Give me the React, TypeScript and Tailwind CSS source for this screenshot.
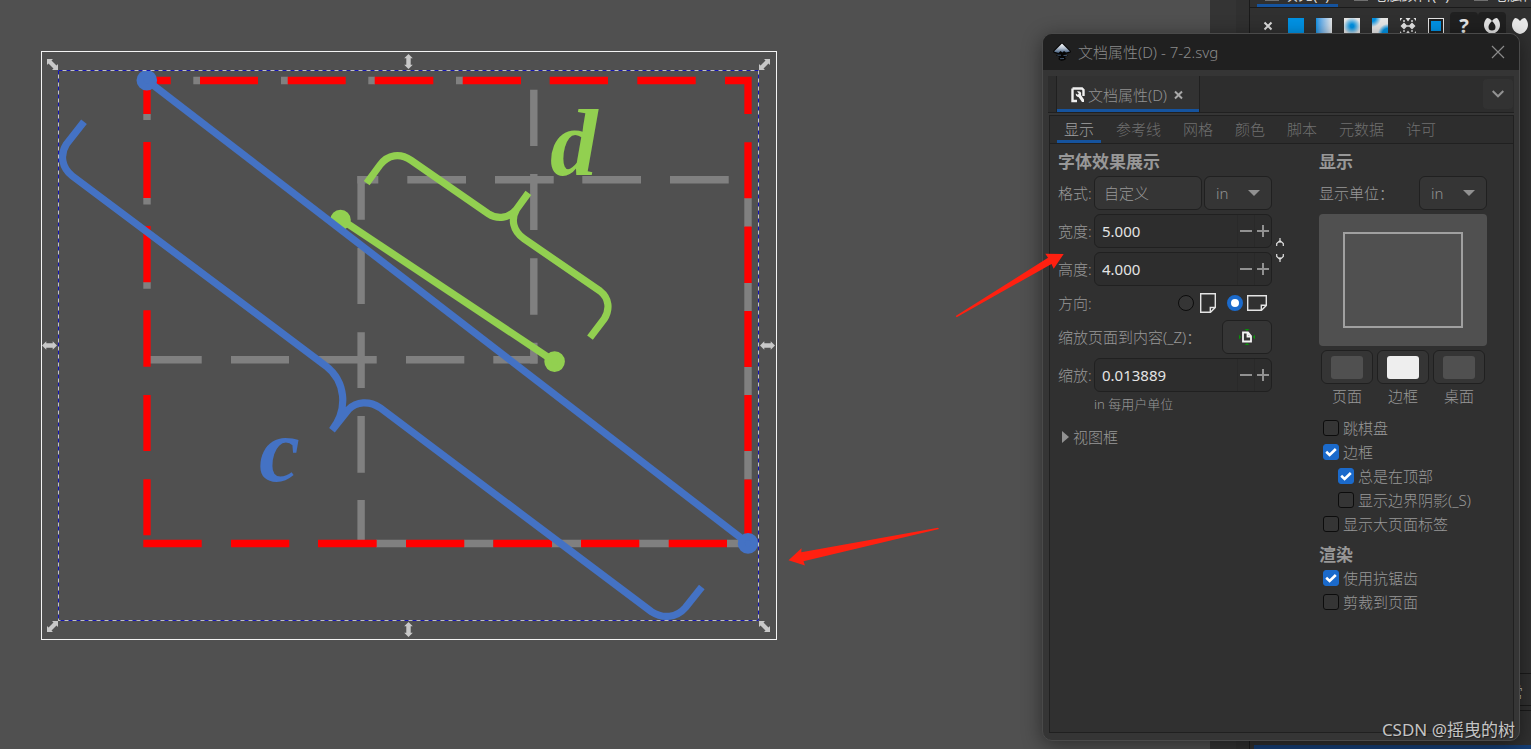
import React, { useState } from 'react';
import { clsx } from 'clsx';

const BLUE = '#4472c4';
const GREEN = '#92d050';
const GREY = '#808080';

const HANDLE_DIAGONAL = 'M-5.5-5.5H.5L-1-4 4 1 5.5-.5V5.5H-.5L1 4-4-1-5.5.5Z';
const HANDLE_STRAIGHT = 'M0-7.5 4.3-3.2H2.2V3.2H4.3L0 7.5-4.3 3.2H-2.2V-3.2H-4.3Z';

const HANDLES = [
  { x: 52.5, y: 64.5, d: HANDLE_DIAGONAL, turn: 0 },
  { x: 408.5, y: 61.5, d: HANDLE_STRAIGHT, turn: 0 },
  { x: 764.5, y: 64.5, d: HANDLE_DIAGONAL, turn: 90 },
  { x: 767.5, y: 345.5, d: HANDLE_STRAIGHT, turn: 90 },
  { x: 764.5, y: 626.5, d: HANDLE_DIAGONAL, turn: 0 },
  { x: 408.5, y: 629.5, d: HANDLE_STRAIGHT, turn: 0 },
  { x: 52.5, y: 626.5, d: HANDLE_DIAGONAL, turn: 90 },
  { x: 49.5, y: 345.5, d: HANDLE_STRAIGHT, turn: 90 },
];

const Drawing: React.FC = () => (
  <svg viewBox="0 0 1210 749" preserveAspectRatio="xMinYMin meet" className="block h-full w-full" aria-label="drawing">
    <rect x="41.5" y="51.5" width="735" height="588" fill="none" stroke="#f4f4f4" />

    {/* grey dashes */}
    <g stroke={GREY} strokeWidth="7.4" fill="none">
      <path d="M147 114V120M147 198V204.5M147 282V288.7" />
      <path d="M193.3 80.5H200M281 80.5H288M368.3 80.5H375M456 80.5H463" />
      <path d="M748 198V227M748 283V311M748 367V395.3M748 451V479.5" />
      <path d="M376 543.5H406.5M464 543.5H493.5M551 543.5H581.3M639 543.5H669M727 543.5H742" />
      <path d="M361.1 176V219.7M361.1 247.7V304M361.1 332.3V388M361.1 416V472.7M361.1 500V540" />
      <path d="M533.8 89.7V146M533.8 174V230M533.8 258.3V314.7M533.8 342.7V363.4" />
      <path d="M357.4 179.8H378.3M407.3 179.8H466M495 179.8H553.7M582.3 179.8H641M670 179.8H728.7" />
      <path d="M150 359.7H201.7M231 359.7H289M318.3 359.7H376.7M406 359.7H464.3M493.3 359.7H537.5" />
    </g>

    {/* red outer frame */}
    <g stroke="#ff0000" strokeWidth="7.3" fill="none">
      <path d="M147 80V114M147 142V198M147 226V282.3M147 310.3V366.7M147 395V451M147 479.3V535.3" />
      <path d="M147 80.5H170.7M200 80.5H258M287.7 80.5H345.7M374.7 80.5H433.3M462.7 80.5H521M549.7 80.5H608M637.3 80.5H695.7" />
      <path d="M725 80.5H748V114M748 142.3V198.3M748 226.6V283M748 311V367M748 395V451M748 479.5V540" />
      <path d="M143.3 543.5H201.7M231 543.5H289.3M318 543.5H376.7M406 543.5H464.3M493.3 543.5H552M581 543.5H639.3M668.7 543.5H727" />
    </g>

    {/* line d with its brace */}
    <g stroke={GREEN} strokeWidth="7.2" fill="none">
      <path d="M340.5 219 554.5 361.5" />
      <circle cx="340.5" cy="220" r="6.7" fill={GREEN} />
      <circle cx="554.6" cy="361.6" r="6.7" fill={GREEN} />
      <path d="M366.7 183.2 380 165C388 154.5 400 152.8 411 160.3L488.3 213.7C498 220 509 218 516.3 209.5L528.4 192.8" />
      <path d="M516.3 209.8C511 219 512.5 231 524 238.8L600 291C609 298 610.5 309 604 319.3L590 337.6" />
    </g>
    <text x="550" y="174.5" fontSize="95" fill={GREEN} className="font-['Liberation_Serif',serif] font-bold italic">d</text>

    {/* line c with its brace */}
    <g stroke={BLUE} strokeWidth="7.2" fill="none">
      <path d="M147 80.3 748 543.4" />
      <circle cx="146.8" cy="80.3" r="6.7" fill={BLUE} />
      <circle cx="748" cy="543.4" r="6.7" fill={BLUE} />
      <path d="M84 121.7 66.5 144C59.5 155 62 168 72.3 176L326 366C345 381 349 408 332 430.2L348.5 409.5C356.5 401.5 369 400.5 380 407.7L651.5 611.7C663 619 676.5 618 685.5 607.5L701.8 587" />
    </g>
    <text x="259" y="480.5" fontSize="92" fill={BLUE} className="font-['Liberation_Serif',serif] font-bold italic">c</text>

    {/* selection box */}
    <rect x="58.5" y="70.5" width="700" height="550" fill="none" stroke="#c4c4c4" />
    <rect x="58.5" y="70.5" width="700" height="550" fill="none" stroke="#1414b4" strokeDasharray="4 4" />
    {HANDLES.map((h) => (
      <path key={`${h.x}-${h.y}`} d={h.d} fill="#c8c8c8" transform={`translate(${h.x} ${h.y}) rotate(${h.turn})`} />
    ))}
  </svg>
);

const PAINT_BUTTON = 'grid size-7 shrink-0 place-items-center rounded';

const PaintIcons: React.FC = () => (
  <div className="flex h-7 shrink-0 items-center pl-1">
    <button type="button" aria-label="none" className={PAINT_BUTTON}>
      <svg width="16" height="16" viewBox="0 0 16 16" stroke="#dcdcdc" strokeWidth="2">
        <path d="M4.5 4.5 11.5 11.5M11.5 4.5 4.5 11.5" />
      </svg>
    </button>
    <button type="button" aria-label="flat" className={PAINT_BUTTON}>
      <span className="size-4 bg-[#0092e4]" />
    </button>
    <button type="button" aria-label="linear" className={PAINT_BUTTON}>
      <span className="size-4 bg-linear-to-r from-[#0092e4] to-[#e8e8e8]" />
    </button>
    <button type="button" aria-label="radial" className={PAINT_BUTTON}>
      <span className="size-4 bg-[radial-gradient(circle,#0092e4_15%,#e8e8e8_75%)]" />
    </button>
    <button type="button" aria-label="mesh" className={PAINT_BUTTON}>
      <span className="size-4 bg-[radial-gradient(circle_at_0_0,#0092e4_15%,transparent_40%),radial-gradient(circle_at_100%_100%,#0092e4_25%,#e8e8e8_45%)]" />
    </button>
    <button type="button" aria-label="pattern" className={PAINT_BUTTON}>
      <svg width="16" height="16" viewBox="0 0 16 16" fill="#e4e4e4">
        <path d="M4 4.500 7.500 8 4 11.500.500 8ZM12 4.500 15.500 8 12 11.500 8.500 8ZM0 0H2.500L0 3ZM5.500 0H10.500L8 3.500ZM13.500 0H16V3ZM0 13 2.500 16H0ZM8 12.500 10.500 16H5.500ZM16 13V16H13.500Z" />
        <path d="M7 7H9V9H7ZM3 2H5V4H3ZM11 2H13V4H11ZM3 12H5V14H3ZM11 12H13V14H11Z" opacity=".7" />
      </svg>
    </button>
    <button type="button" aria-label="swatch" className={PAINT_BUTTON}>
      <svg width="16" height="16" viewBox="0 0 16 16">
        <rect x=".5" y=".5" width="15" height="15" fill="#202020" stroke="#e4e4e4" />
        <rect x="3" y="3" width="10" height="10" fill="#0092e4" />
      </svg>
    </button>
    <button type="button" aria-label="unknown" className={clsx(PAINT_BUTTON, "bg-[#202020] font-['Noto_Sans',sans-serif] text-xl leading-none font-bold text-[#e4e4e4]")}>
      ?
    </button>
    <button type="button" aria-label="even-odd" className={clsx(PAINT_BUTTON, 'bg-[#202020]')}>
      <svg width="16" height="16" viewBox="0 0 16 16" fill="#e4e4e4" fillRule="evenodd">
        <path d="M3 0C5 0 6.5 1 8 3 9.5 1 11 0 13 0 15 2 16 4 16 7 16 11 13 15 8 16 3 15 0 11 0 7 0 4 1 2 3 0ZM8 3C6 5 4.500 7 4.500 9A3.500 3.500 0 0 0 11.500 9C11.500 7 10 5 8 3Z" />
      </svg>
    </button>
    <button type="button" aria-label="non-zero" className={PAINT_BUTTON}>
      <svg width="16" height="16" viewBox="0 0 16 16" fill="#e8e8e8">
        <path d="M3 0C5 0 6.5 1 8 3 9.5 1 11 0 13 0 15 2 16 4 16 7 16 11 13 15 8 16 3 15 0 11 0 7 0 4 1 2 3 0Z" />
      </svg>
    </button>
  </div>
);

const DOCK_TABS = ['填充(F)', '笔触颜料(P)', '笔触样式(Y)'];

const DockPanel: React.FC = () => (
  <aside className="flex h-full w-[321px] shrink-0 overflow-hidden bg-[#303030]">
    <div className="w-[26px] shrink-0 bg-[#343434]" />
    <div className="ml-[13px] flex min-w-0 flex-1 flex-col border-l border-[#1a1a1a]">
      <div className="flex h-2 shrink-0 items-end gap-2 overflow-hidden border-b border-[#1a1a1a] pl-[7px] text-[15px] leading-5 font-normal whitespace-nowrap text-[#d8d8d8]">
        {DOCK_TABS.map((tab, i) => (
          <button
            key={tab}
            type="button"
            className={clsx('flex shrink-0 gap-1 border-b-3 px-2', i === 0 ? 'border-[#15539e]' : 'border-transparent')}
          >
            <span className="mb-[3px] w-[14px] self-stretch border-b-2 border-[#707070]" />
            {tab}
          </button>
        ))}
      </div>
      <div className="h-1 shrink-0" />
      <PaintIcons />
      <div className="flex-1" />
      <div className="border-y border-[#1a1a1a] py-1">
        <div className="h-7 border-b border-[#1a1a1a] pr-2 text-right text-[15px] leading-7 text-[#c0c0c0]">正常</div>
      </div>
      <div className="h-[34px] shrink-0" />
      <div className="ml-1 h-1 shrink-0 bg-[#153e75]" />
    </div>
  </aside>
);

const Triangle: React.FC = () => (
  <svg className="pointer-events-none col-start-1 row-start-1 mr-3 self-center justify-self-end" width="12" height="6" viewBox="0 0 12 6">
    <path d="M0 0H12L6 6Z" fill="#919191" />
  </svg>
);

const UnitSelect: React.FC<{ label: string }> = ({ label }) => (
  <div className="grid w-[68px] shrink-0">
    <select aria-label={label} className="col-start-1 row-start-1 h-[34px] w-full appearance-none rounded-md border border-[#202020] bg-[#353535] pl-[11px] text-[#919191]">
      <option>in</option>
      <option>mm</option>
      <option>px</option>
    </select>
    <Triangle />
  </div>
);

interface SpinFieldProps {
  id: string;
  label: string;
  value: string;
}

const SpinField: React.FC<SpinFieldProps> = ({ id, label, value }) => (
  <div className="flex items-center">
    <label htmlFor={id} className="w-9 shrink-0 whitespace-nowrap">{label}</label>
    <div className="flex h-[34px] min-w-0 flex-1 overflow-hidden rounded-md border border-[#202020] bg-[#2d2d2d]">
      <input id={id} type="text" defaultValue={value} className="min-w-0 flex-1 bg-transparent pl-[7px] font-normal text-[#e4e4e4] outline-none" />
      <button type="button" aria-label={`${label} -`} className="grid w-[17px] place-items-center border-l border-[#292929]">
        <svg width="12" height="12" viewBox="0 0 12 12"><path d="M0 6H12" stroke="#919191" strokeWidth="2" /></svg>
      </button>
      <button type="button" aria-label={`${label} +`} className="grid w-[17px] place-items-center border-l border-[#292929]">
        <svg width="12" height="12" viewBox="0 0 12 12"><path d="M0 6H12M6 0V12" stroke="#919191" strokeWidth="2" /></svg>
      </button>
    </div>
  </div>
);

interface CheckRowProps {
  label: string;
  checked?: boolean;
  nested?: boolean;
}

const CheckRow: React.FC<CheckRowProps> = ({ label, checked, nested }) => (
  <label className={clsx('flex h-6 items-center gap-1', nested ? 'pl-[19px]' : 'pl-1')}>
    <span className="grid size-4 place-items-center">
      <input type="checkbox" defaultChecked={checked} className="peer col-start-1 row-start-1 size-4 appearance-none rounded-[3px] border border-[#0c0c0c] bg-[#353535] checked:border-[#1b6acb] checked:bg-[#1b6acb]" />
      <svg className="pointer-events-none col-start-1 row-start-1 hidden peer-checked:block" width="12" height="12" viewBox="0 0 12 12">
        <path d="M1.2 5.8 4.6 9 10.8 3" fill="none" stroke="#fff" strokeWidth="2.6" />
      </svg>
    </span>
    {label}
  </label>
);

const TABS = ['显示', '参考线', '网格', '颜色', '脚本', '元数据', '许可'];

const SWATCHES = [
  { label: '页面', color: 'bg-[#505050]' },
  { label: '边框', color: 'bg-[#eeeeee]' },
  { label: '桌面', color: 'bg-[#505050]' },
];

const GeneralColumn: React.FC = () => {
  const [landscape, setLandscape] = useState(true);
  const radio = 'size-4 appearance-none rounded-full border border-[#0c0c0c] bg-[#353535] checked:border-4 checked:border-[#1b6acb] checked:bg-white';

  return (
    <div className="w-[226px] shrink-0">
      <h2 className="h-[29px] text-[17px] leading-[29px] font-bold">字体效果展示</h2>
      <div className="flex w-[214px] items-center">
        <span className="w-9 shrink-0 whitespace-nowrap">格式:</span>
        <button type="button" className="mr-[2px] h-[34px] flex-1 rounded-md border border-[#202020] bg-[#353535] pl-[9px] text-left">
          自定义
        </button>
        <UnitSelect label="格式" />
      </div>
      <div className="mt-1 flex items-center gap-1">
        <div className="flex w-[214px] flex-col gap-1">
          <SpinField id="page-width" label="宽度:" value="5.000" />
          <SpinField id="page-height" label="高度:" value="4.000" />
        </div>
        <button type="button" aria-label="lock">
          <svg width="8" height="26" viewBox="0 0 8 26" fill="none" stroke="#e0e0e0" strokeWidth="1.2">
            <path d="M.7 9V6.500L4 3.500 7.300 6.500V9M4 1V6M.7 17V19.500L4 22.500 7.300 19.500V17M4 20V25" />
          </svg>
        </button>
      </div>
      <div className="mt-1 flex h-[26px] w-[214px] items-center">
        <span className="flex-1">方向:</span>
        <label className="mr-[11px] flex items-center gap-[6px]">
          <input type="radio" name="orientation" aria-label="portrait" className={radio} checked={!landscape} onChange={() => setLandscape(false)} />
          <svg width="16" height="20" viewBox="0 0 16 20" fill="none" stroke="#e4e4e4" strokeWidth="1.4">
            <path d="M.7.7H15.3V14.5L10.500 19.3H.7ZM15 14.5H10.3V19" />
          </svg>
        </label>
        <label className="mr-[5px] flex items-center gap-1">
          <input type="radio" name="orientation" aria-label="landscape" className={radio} checked={landscape} onChange={() => setLandscape(true)} />
          <svg width="20" height="16" viewBox="0 0 20 16" fill="none" stroke="#e4e4e4" strokeWidth="1.4">
            <path d="M.7.7H19.3V10.5L14.5 15.3H.7ZM19 10.3H14.3V15" />
          </svg>
        </label>
      </div>
      <div className="mt-1 flex w-[214px] items-center justify-between">
        <span>缩放页面到内容(_Z)：</span>
        <button type="button" aria-label="缩放页面到内容" className="-ml-4 grid h-[34px] w-[50px] place-items-center rounded-md border border-[#202020] bg-[#353535]">
          <svg width="16" height="16" viewBox="0 0 16 16">
            <path d="M5.5 0H10.5L8 2ZM5.5 16H10.5L8 14ZM0 5.5V10.5L2 8ZM16 5.5V10.5L14 8Z" fill="#0a8f0a" />
            <path d="M4 3.5H9L12 7V12.5H4ZM8.5 4V7.5H12" fill="none" stroke="#f4f4f4" strokeWidth="1.8" />
          </svg>
        </button>
      </div>
      <div className="mt-1 w-[214px]">
        <SpinField id="page-scale" label="缩放:" value="0.013889" />
      </div>
      <p className="pl-9 text-[13px] leading-6">in 每用户单位</p>
      <button type="button" className="mt-2 flex h-[26px] items-center gap-1 pl-1">
        <svg width="7" height="12" viewBox="0 0 7 12"><path d="M0 0 7 6 0 12Z" fill="#919191" /></svg>
        视图框
      </button>
    </div>
  );
};

const DisplayColumn: React.FC = () => (
  <div className="w-[168px] shrink-0">
    <h2 className="h-[29px] text-[17px] leading-[29px] font-bold">显示</h2>
    <div className="flex items-center justify-between">
      <span>显示单位：</span>
      <UnitSelect label="显示单位" />
    </div>
    <div className="mt-1 h-[132px] rounded-sm bg-[#505050] px-6 py-[18px]">
      <div className="h-full border-2 border-[#a0a0a0]" />
    </div>
    <div className="mt-1 flex justify-between px-[2px]">
      {SWATCHES.map((s) => (
        <label key={s.label} className="flex flex-col items-center">
          <button type="button" aria-label={s.label} className="grid h-[34px] w-[52px] place-items-center rounded-md border border-[#202020] bg-[#353535]">
            <span className={clsx('h-[23px] w-8 rounded-[3px]', s.color)} />
          </button>
          <span className="leading-6">{s.label}</span>
        </label>
      ))}
    </div>
    <div className="mt-2">
      <CheckRow label="跳棋盘" />
      <CheckRow label="边框" checked />
      <CheckRow label="总是在顶部" checked nested />
      <CheckRow label="显示边界阴影(_S)" nested />
      <CheckRow label="显示大页面标签" />
    </div>
    <h2 className="mt-2 text-[17px] leading-[22px] font-bold">渲染</h2>
    <CheckRow label="使用抗锯齿" checked />
    <CheckRow label="剪裁到页面" />
  </div>
);

const DocumentDialog: React.FC = () => (
  <section className="absolute top-[33px] right-[11px] bottom-2 flex w-[478px] flex-col overflow-hidden rounded-[10px] border border-[#4a4a4a] bg-[#353535] shadow-[0_4px_20px_rgba(0,0,0,0.45)]">
    <header className="flex h-9 shrink-0 items-center bg-[#202020] pr-[14px] pl-[9px] text-[#8a8a8a]">
      <svg width="20" height="20" viewBox="0 0 20 20">
        <defs>
          <linearGradient id="peak" x1="0" y1="0" x2="0" y2="1">
            <stop offset="0" stopColor="#ffffff" />
            <stop offset="0.5" stopColor="#b4c0d0" />
            <stop offset="1" stopColor="#3c5878" />
          </linearGradient>
        </defs>
        <path d="M10 1C11 1 11.5 1.5 12 2L18 8C19.5 9.5 19 10.5 17.5 11L13 12 16 13.5C15 14.500 13 14 13 15.5S15 16 14 17 11 18.5 10 18.8 6 17.5 6.5 16.5 8 15.5 7 14.8 3.500 14 4.500 13L7 12.5 2.5 11C1 10.5.5 9.5 2 8L8 2C8.5 1.500 9 1 10 1Z" fill="#050505" />
        <path d="M10 1.500 18 9.500 14 10.500 12 9 10.500 10.500 8.500 9 6.500 11 2 9.500Z" fill="url(#peak)" />
        <path d="M5.500 13.200H9M11.500 13.500 15 13.300M8 16.700 12 16.500" stroke="#40546c" strokeWidth="1" />
      </svg>
      <h1 className="flex-1 pl-[6px] text-[15px]">文档属性(D) - 7-2.svg</h1>
      <button type="button" aria-label="close">
        <svg width="14" height="14" viewBox="0 0 14 14" stroke="#8a8a8a" strokeWidth="1.2">
          <path d="M1 1 13 13M13 1 1 13" />
        </svg>
      </button>
    </header>
    <div className="flex min-h-0 flex-1 flex-col px-[5px] pt-[6px] pb-[7px]">
      <div className="flex h-[37px] shrink-0 border-b border-[#202020] bg-[#2d2d2d] pl-2">
        <div className="flex flex-col border-x border-[#202020] bg-[#323232]">
          <div className="flex flex-1 items-center gap-[3px] pt-1 pr-4 pl-[14px]">
            <svg width="14" height="16" viewBox="0 0 14 16">
              <path d="M1.500 1.500H11L12.500 3V9M1.500 1.500V14H6" fill="none" stroke="#f0f0f0" strokeWidth="2.4" />
              <path d="M6 4.500C9 3.500 10.8 5.5 10 8L13 12.500V15H11L7.500 10C6 10 4.500 8.500 4.800 6.500L6.800 7.800 7.800 6.500Z" fill="#f0f0f0" />
            </svg>
            <span className="text-[#919191]">文档属性(D)</span>
            <button type="button" aria-label="close tab" className="pl-1">
              <svg width="9" height="10" viewBox="0 0 9 10" stroke="#a8a8a8" strokeWidth="2">
                <path d="M1 1.500 8 8.500M8 1.500 1 8.500" />
              </svg>
            </button>
          </div>
          <div className="h-[3px] shrink-0 bg-[#15539e]" />
        </div>
        <button type="button" aria-label="menu" className="mt-[3px] mr-[1px] ml-auto grid h-[30px] w-[30px] place-items-center rounded bg-[#323232]">
          <svg width="12" height="8" viewBox="0 0 12 8" fill="none" stroke="#919191" strokeWidth="2">
            <path d="M.7 1 6 6.300 11.300 1" />
          </svg>
        </button>
      </div>
      <div className="mt-[2px] ml-px flex min-h-0 flex-1 flex-col border border-[#202020] bg-[#303030]">
        <nav role="tablist" className="flex h-7 shrink-0 border-b border-[#202020] bg-[#2d2d2d] pl-[7px]">
          {TABS.map((tab, i) => (
            <button
              key={tab}
              type="button"
              role="tab"
              aria-selected={i === 0}
              className={clsx(
                'mr-2 border-b-3 px-[7px] pt-px leading-6',
                i === 0 ? 'border-[#15539e] text-[#a0a0a0]' : 'border-transparent text-[#707070]'
              )}
            >
              {tab}
            </button>
          ))}
        </nav>
        <div className="flex flex-1 justify-between pt-[3px] pr-[26px] pl-2">
          <GeneralColumn />
          <DisplayColumn />
        </div>
      </div>
    </div>
  </section>
);

const App: React.FC = () => (
  <div className="relative flex h-screen overflow-hidden bg-[#505050] font-['Noto_Sans','Noto_Sans_CJK_SC',sans-serif] text-[15px] leading-5 font-light text-[#989898]">
    <main className="min-w-0 flex-1">
      <Drawing />
    </main>
    <DockPanel />
    <DocumentDialog />
    {/* pointer arrows */}
    <svg className="pointer-events-none absolute inset-0 h-full w-full" viewBox="0 0 1531 749" preserveAspectRatio="xMinYMin meet" fill="#ff2010">
      <path d="M955.7 316 1048 257.7 1045.3 253.7 1063.7 254 1053.7 268.7 1051.5 264 956.7 317.3Z" />
      <path d="M788.500 560.300 801.500 548.300 801.300 552.300 938 527.800 939 529 803.5 561.300 805 565.500Z" />
    </svg>
    <p className="pointer-events-none absolute right-4 bottom-[7px] text-[17px] leading-6 font-normal whitespace-nowrap text-[#c4c4c4] [text-shadow:1px_1px_1px_#202020]">
      CSDN @摇曳的树
    </p>
  </div>
);

export default App;
